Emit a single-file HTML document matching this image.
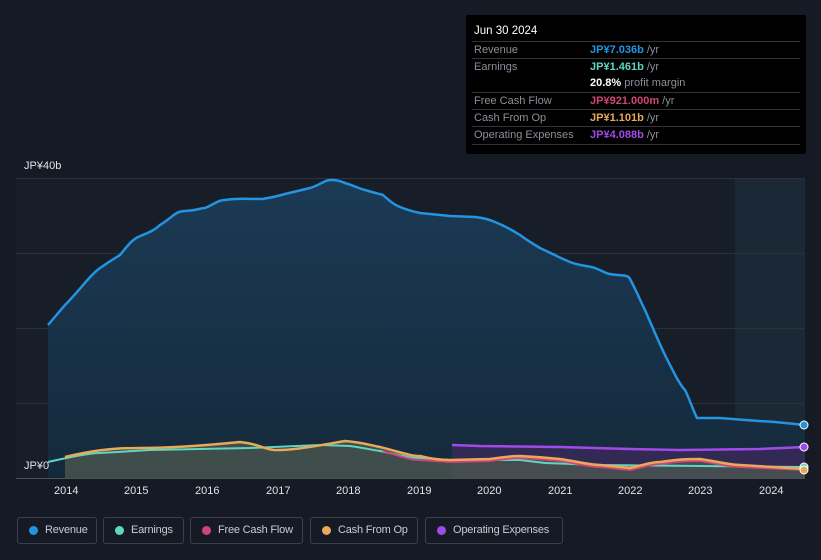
<!DOCTYPE html><html><head><style>
body{margin:0;width:821px;height:560px;background:#151a24;font-family:"Liberation Sans",sans-serif;overflow:hidden;position:relative}
.tt{position:absolute;left:466px;top:15px;width:340px;height:139px;background:#000;border-radius:2px;font-size:11px;color:#8a8f98}
.tt .h{color:#fff;font-size:11.5px;position:absolute;left:8px;top:10px}
.row{position:absolute;left:6px;width:328px;border-top:1px solid #333;height:17px}
.row span{position:absolute;left:2px;top:2px}
.row b{position:absolute;left:118px;top:2px;font-weight:bold}
.row i{font-style:normal;font-weight:normal;color:#8a8f98}
.lg{position:absolute;top:517px;height:27px;border:1px solid #3a3f4a;border-radius:3px;color:#c8ccd2;font-size:11px;box-sizing:border-box;line-height:25px;padding-left:27px;white-space:nowrap;letter-spacing:-0.2px}
.lg:before{content:"";position:absolute;left:11px;top:8px;width:9px;height:9px;border-radius:50%;background:var(--c)}
.ax{position:absolute;top:485px;color:#e0e3e8;font-size:11px}
</style></head><body>
<svg width="821" height="560" style="position:absolute;left:0;top:0">
<defs><linearGradient id="g" x1="0" y1="0" x2="0" y2="1"><stop offset="0" stop-color="#1b3a55"/><stop offset="1" stop-color="#15293b"/></linearGradient></defs>
<rect x="16" y="178" width="789" height="300" fill="#181e28"/>
<rect x="735" y="178" width="70" height="300" fill="#1b2836"/>
<g stroke="#2c323c" stroke-width="1"><line x1="16" y1="178.5" x2="805" y2="178.5"/><line x1="16" y1="253.5" x2="805" y2="253.5"/><line x1="16" y1="328.5" x2="805" y2="328.5"/><line x1="16" y1="403.5" x2="805" y2="403.5"/></g>
<path d="M48,325 L65,305 C80,290 90,275 100,268 C110,261 115,258 120,255 C128,245 132,240 138,237 C150,232 155,230 160,225 C172,218 175,211 185,211 C200,210 200,208 205,208 C215,204 218,200 225,200 C240,198 245,199 262,199 C275,197 285,194 285,194 L310,188 C320,185 325,180 330,180 C338,180 340,181 345,183 C355,186 360,189 365,190 C375,193 380,194 383,195 C392,203 395,205 400,207 C410,211 415,212 420,213 L450,216 L475,217 C485,218 490,220 495,222 C505,226 512,230 520,235 C528,241 535,245 540,248 C555,255 560,258 570,262 C580,266 590,266 595,268 C605,272 607,274 610,274 C620,276 628,274 630,279 C637,292 640,300 645,310 C655,333 660,345 665,355 C675,375 680,385 685,390 C690,400 693,410 697,418 L720,418 L745,420 L775,422 L805,425 L805,478 L48,478 Z" fill="url(#g)"/>
<path d="M48,325 L65,305 C80,290 90,275 100,268 C110,261 115,258 120,255 C128,245 132,240 138,237 C150,232 155,230 160,225 C172,218 175,211 185,211 C200,210 200,208 205,208 C215,204 218,200 225,200 C240,198 245,199 262,199 C275,197 285,194 285,194 L310,188 C320,185 325,180 330,180 C338,180 340,181 345,183 C355,186 360,189 365,190 C375,193 380,194 383,195 C392,203 395,205 400,207 C410,211 415,212 420,213 L450,216 L475,217 C485,218 490,220 495,222 C505,226 512,230 520,235 C528,241 535,245 540,248 C555,255 560,258 570,262 C580,266 590,266 595,268 C605,272 607,274 610,274 C620,276 628,274 630,279 C637,292 640,300 645,310 C655,333 660,345 665,355 C675,375 680,385 685,390 C690,400 693,410 697,418 L720,418 L745,420 L775,422 L805,425" fill="none" stroke="#2394e0" stroke-width="2.5"/>
<path d="M452,445 L480,446 L560,447 L630,449 L680,450 L760,449 L805,447 L805,478 L452,478Z" fill="#3a2a5a" opacity=".8"/>
<path d="M65,457 C90,451 110,448 140,448 C170,448 200,446 240,442 C260,444 265,450 275,450 C295,450 310,447 345,441 C360,442 370,445 380,447 C400,452 410,456 420,456 C435,460 445,460 450,460 L490,459 C505,457 510,456 520,456 C540,457 550,458 560,459 C580,462 590,465 600,465 L630,468 C645,465 650,462 660,462 C680,459 690,459 700,459 C720,462 730,465 740,465 L805,469 L805,478 L65,478Z" fill="#4e5a50" opacity=".75"/>
<path d="M48,462 C70,457 90,453 100,453 L150,450 L250,448 L320,445 L350,446 C365,448 372,450 380,451 C400,455 410,458 420,458 L450,460 L520,460 L545,463 L600,465 L700,466 L800,467" fill="none" stroke="#5fd6c0" stroke-width="2"/>
<path d="M383,451 C400,456 410,460 420,460 L450,462 L490,461 C505,459 510,458 520,458 C540,459 550,460 560,461 C580,464 590,467 600,467 L630,470 C645,467 650,464 660,464 C680,461 690,461 700,461 C720,464 730,467 740,467 L805,470" fill="none" stroke="#d0447a" stroke-width="2"/>
<path d="M65,457 C90,451 110,448 140,448 C170,448 200,446 240,442 C260,444 265,450 275,450 C295,450 310,447 345,441 C360,442 370,445 380,447 C400,452 410,456 420,456 C435,460 445,460 450,460 L490,459 C505,457 510,456 520,456 C540,457 550,458 560,459 C580,462 590,465 600,465 L630,468 C645,465 650,462 660,462 C680,459 690,459 700,459 C720,462 730,465 740,465 L805,469" fill="none" stroke="#e8a95a" stroke-width="2.5"/>
<path d="M452,445 L480,446 L560,447 L630,449 L680,450 L760,449 L805,447" fill="none" stroke="#a24ae8" stroke-width="2.5"/>
<line x1="16" y1="478.5" x2="805" y2="478.5" stroke="#4a505a"/>
<circle cx="804" cy="425" r="4" fill="#2394e0" stroke="#fff" stroke-width="1"/>
<circle cx="804" cy="447" r="4" fill="#a24ae8" stroke="#fff" stroke-width="1"/>
<circle cx="804" cy="467" r="4" fill="#5fd6c0" stroke="#fff" stroke-width="1"/>
<circle cx="804" cy="470" r="4" fill="#e8a95a" stroke="#fff" stroke-width="1"/>
</svg>
<div style="position:absolute;left:24px;top:160px;color:#e0e3e8;font-size:11px">JP¥40b</div>
<div style="position:absolute;left:24px;top:460px;color:#e0e3e8;font-size:11px">JP¥0</div>
<div class="ax" style="left:54px">2014</div><div class="ax" style="left:124px">2015</div><div class="ax" style="left:195px">2016</div><div class="ax" style="left:266px">2017</div><div class="ax" style="left:336px">2018</div><div class="ax" style="left:407px">2019</div><div class="ax" style="left:477px">2020</div><div class="ax" style="left:548px">2021</div><div class="ax" style="left:618px">2022</div><div class="ax" style="left:688px">2023</div><div class="ax" style="left:759px">2024</div>
<div class="tt"><div class="h">Jun 30 2024</div>
<div class="row" style="top:26px"><span>Revenue</span><b style="color:#2394e0">JP¥7.036b <i>/yr</i></b></div>
<div class="row" style="top:43px"><span>Earnings</span><b style="color:#5fd6c0">JP¥1.461b <i>/yr</i></b></div>
<div class="row" style="top:60px;border-top:none"><b style="color:#fff">20.8% <i>profit margin</i></b></div>
<div class="row" style="top:77px"><span>Free Cash Flow</span><b style="color:#d0447a">JP¥921.000m <i>/yr</i></b></div>
<div class="row" style="top:94px"><span>Cash From Op</span><b style="color:#e8a95a">JP¥1.101b <i>/yr</i></b></div>
<div class="row" style="top:111px;border-bottom:1px solid #333"><span>Operating Expenses</span><b style="color:#a24ae8">JP¥4.088b <i>/yr</i></b></div>
</div>
<div class="lg" style="left:17px;width:80px;--c:#2394e0">Revenue</div>
<div class="lg" style="left:103px;width:81px;--c:#5fd6c0">Earnings</div>
<div class="lg" style="left:190px;width:113px;--c:#d0447a">Free Cash Flow</div>
<div class="lg" style="left:310px;width:108px;--c:#e8a95a">Cash From Op</div>
<div class="lg" style="left:425px;width:138px;--c:#a24ae8">Operating Expenses</div>
</body></html>
